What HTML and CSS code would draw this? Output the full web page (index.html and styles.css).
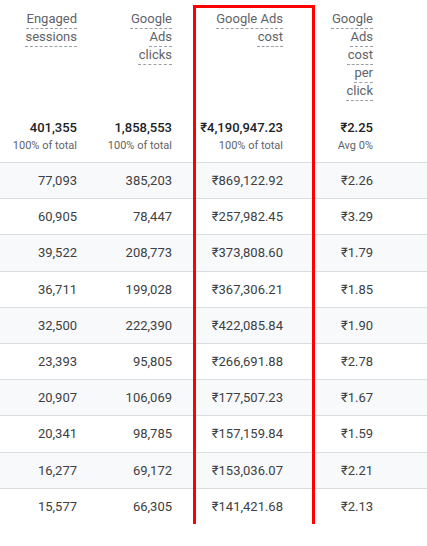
FILE: index.html
```html
<!DOCTYPE html>
<html lang="en">
<head>
    <meta charset="UTF-8">
    <meta name="viewport" content="width=device-width, initial-scale=1.0">
    <title>Google Ads report</title>
    <link rel="stylesheet" href="styles.css">
</head>
<body>
    <div class="report">
        <!-- column headers -->
        <div class="row head">
            <div class="cell"><span class="label">Engaged sessions</span></div>
            <div class="cell"><span class="label label-narrow">Google Ads clicks</span></div>
            <div class="cell"><span class="label label-mid">Google Ads cost</span></div>
            <div class="cell"><span class="label label-thin">Google Ads cost per click</span></div>
            <div class="cell"></div>
        </div>

        <!-- totals -->
        <div class="row totals">
            <div class="cell"><div class="total">401,355</div><div class="sub">100% of total</div></div>
            <div class="cell"><div class="total">1,858,553</div><div class="sub">100% of total</div></div>
            <div class="cell"><div class="total">₹4,190,947.23</div><div class="sub">100% of total</div></div>
            <div class="cell"><div class="total">₹2.25</div><div class="sub">Avg 0%</div></div>
            <div class="cell"></div>
        </div>

        <div class="row data"><div class="cell">77,093</div><div class="cell">385,203</div><div class="cell">₹869,122.92</div><div class="cell">₹2.26</div><div class="cell"></div></div>
        <div class="row data"><div class="cell">60,905</div><div class="cell">78,447</div><div class="cell">₹257,982.45</div><div class="cell">₹3.29</div><div class="cell"></div></div>
        <div class="row data"><div class="cell">39,522</div><div class="cell">208,773</div><div class="cell">₹373,808.60</div><div class="cell">₹1.79</div><div class="cell"></div></div>
        <div class="row data"><div class="cell">36,711</div><div class="cell">199,028</div><div class="cell">₹367,306.21</div><div class="cell">₹1.85</div><div class="cell"></div></div>
        <div class="row data"><div class="cell">32,500</div><div class="cell">222,390</div><div class="cell">₹422,085.84</div><div class="cell">₹1.90</div><div class="cell"></div></div>
        <div class="row data"><div class="cell">23,393</div><div class="cell">95,805</div><div class="cell">₹266,691.88</div><div class="cell">₹2.78</div><div class="cell"></div></div>
        <div class="row data"><div class="cell">20,907</div><div class="cell">106,069</div><div class="cell">₹177,507.23</div><div class="cell">₹1.67</div><div class="cell"></div></div>
        <div class="row data"><div class="cell">20,341</div><div class="cell">98,785</div><div class="cell">₹157,159.84</div><div class="cell">₹1.59</div><div class="cell"></div></div>
        <div class="row data"><div class="cell">16,277</div><div class="cell">69,172</div><div class="cell">₹153,036.07</div><div class="cell">₹2.21</div><div class="cell"></div></div>
        <div class="row data"><div class="cell">15,577</div><div class="cell">66,305</div><div class="cell">₹141,421.68</div><div class="cell">₹2.13</div><div class="cell"></div></div>

        <!-- highlight drawn over the cost column -->
        <div class="highlight"></div>
    </div>
</body>
</html>
```

FILE: styles.css
```css
* {
    margin: 0;
    padding: 0;
    box-sizing: border-box;
}

body {
    font-family: Roboto, "Noto Sans", Arial, sans-serif;
    background: #fff;
    color: #3c4043;
    overflow: hidden;
}

.report {
    position: relative;
    width: 427px;
}

/* Every row shares the same column grid */
.row {
    display: grid;
    grid-template-columns: 77px 95px 111px 90px 1fr;
}

.cell {
    text-align: right;
    font-size: 13px;
}

/* Header labels with dashed underline */
.head {
    height: 118px;
    padding-top: 10px;
}

.head .cell {
    line-height: 18px;
    color: #5f6368;
}

.label {
    text-decoration: underline dashed #9aa0a6;
    text-decoration-thickness: 1px;
    text-underline-offset: 5px;
}

.label-narrow {
    display: inline-block;
    width: 50px;
}

.label-mid {
    display: inline-block;
    width: 70px;
}

.label-thin {
    display: inline-block;
    width: 42px;
}

/* Totals row */
.totals {
    height: 44px;
}

.total {
    font-weight: 500;
    color: #202124;
    line-height: 18px;
    margin-top: 0.5px;
}

.sub {
    font-size: 11px;
    line-height: 18px;
    color: #5f6368;
}

/* Data rows */
.data {
    height: 36.2px;
    border-top: 1px solid #dadce0;
    align-items: center;
}

.data:nth-child(odd) {
    background: #f8f9fa;
}

/* Red annotation box */
.highlight {
    position: absolute;
    left: 193px;
    top: 5px;
    width: 122px;
    height: 530px;
    border: 3px solid #ff0000;
}
```
